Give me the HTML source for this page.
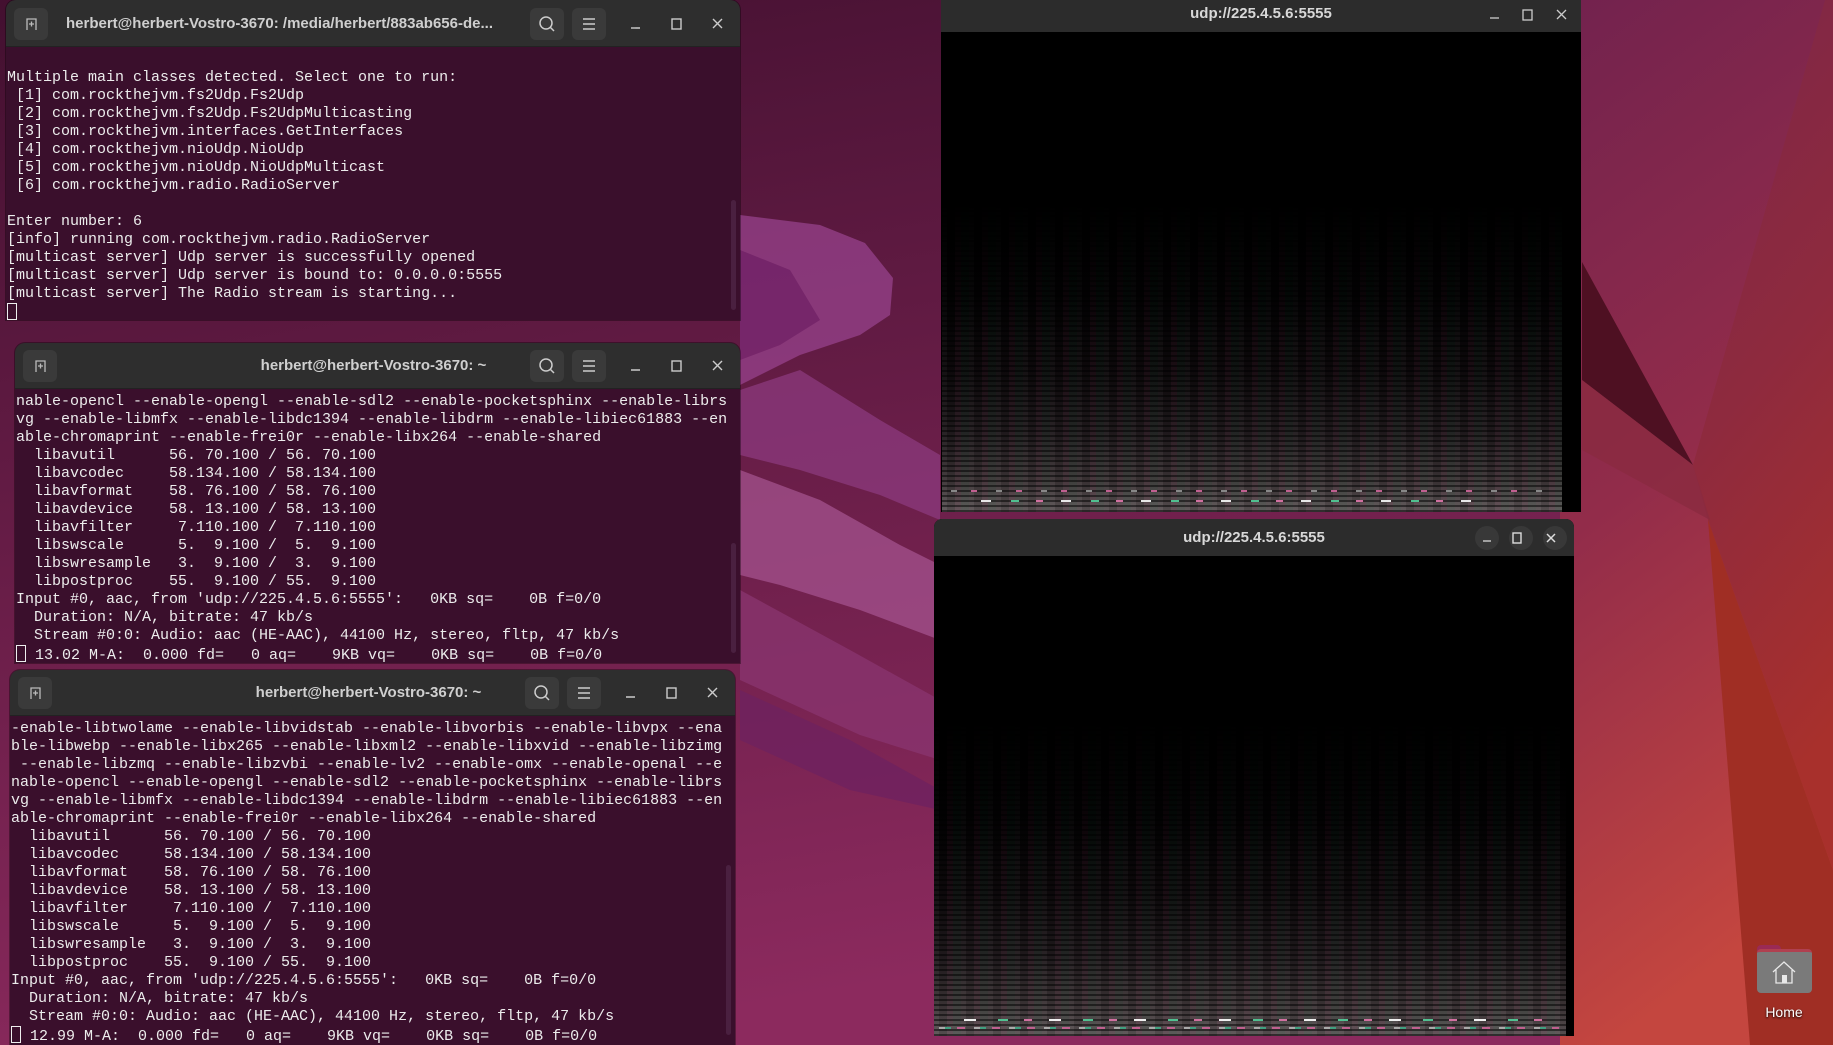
<!DOCTYPE html>
<html><head><meta charset="utf-8">
<style>
*{margin:0;padding:0;box-sizing:border-box}
html,body{width:1833px;height:1045px;overflow:hidden;background:#5a1a44;font-family:"Liberation Sans",sans-serif}
#bg{position:absolute;left:0;top:0}
.term{position:absolute;background:#3a0f2c;border-radius:10px 10px 0 0;overflow:hidden;box-shadow:0 0 0 1px rgba(0,0,0,.35)}
.tb{position:absolute;left:0;top:0;right:0;background:#2e2e2e;border-bottom:1px solid #222}
.btn{position:absolute;top:8px;width:34px;height:32px;background:#3a3a3a;border-radius:6px}
.title{position:absolute;top:0;color:#cfcfcf;font-weight:bold;font-size:15px;white-space:nowrap}
pre{position:absolute;font-family:"Liberation Mono",monospace;font-size:15px;line-height:18px;color:#ececec;white-space:pre}
.cur{display:inline-block;width:10px;height:17px;border:1px solid #eee;vertical-align:-3px}
.sb{position:absolute;right:4px;width:5px;background:#4a2040;border-radius:3px}
.vw{position:absolute;background:#000;overflow:hidden}
.vtb{position:absolute;left:0;top:0;right:0;background:#2c2c2c;color:#d8d8d8;font-weight:bold;font-size:15px;text-align:center}
.spec{position:absolute;background:
 repeating-linear-gradient(0deg,rgba(0,0,0,.5) 0 2px,rgba(0,0,0,0) 2px 5px),
 repeating-linear-gradient(90deg,rgba(255,255,255,.03) 0 5px,rgba(0,0,0,.1) 5px 13px,rgba(255,80,160,.05) 13px 19px,rgba(60,255,160,.04) 19px 27px),
 linear-gradient(180deg,#000 0%,#030203 30%,#0e0a0c 55%,#221c1f 75%,#3e3638 90%,#5e5658 100%);
 -webkit-mask-image:linear-gradient(180deg,transparent 0%,#000 45%);mask-image:linear-gradient(180deg,transparent 0%,#000 45%)}
.hl{position:absolute;height:2px}
</style></head><body>
<svg id="bg" width="1833" height="1045" viewBox="0 0 1833 1045">
<defs>
<linearGradient id="g0" x1="0" y1="0" x2="0.3" y2="1"><stop offset="0" stop-color="#431030"/><stop offset="1" stop-color="#8c2a5e"/></linearGradient>
<linearGradient id="g1" x1="0" y1="0" x2="0.2" y2="1"><stop offset="0" stop-color="#72224e"/><stop offset="0.5" stop-color="#922c4a"/><stop offset="1" stop-color="#c4463f"/></linearGradient>
<linearGradient id="g2" x1="0" y1="0" x2="0.2" y2="1"><stop offset="0" stop-color="#7c2648"/><stop offset="0.5" stop-color="#8e2a3e"/><stop offset="1" stop-color="#a8302c"/></linearGradient>
</defs>
<rect width="1833" height="1045" fill="url(#g0)"/>
<rect x="1560" width="273" height="1045" fill="url(#g1)"/>
<polygon points="1825,0 1833,0 1833,870 1708,520 1693,465" fill="url(#g2)"/>
<polygon points="1833,870 1708,520 1750,1045 1833,1045" fill="#a02e24"/>
<polygon points="1582,262 1693,465 1582,380" fill="#4e1022"/>
<polygon points="1582,380 1693,465 1710,520 1582,450" fill="#8a2a40" opacity=".8"/>
<g opacity=".75">
<polygon points="740,215 820,225 865,243 893,278 890,315 860,335 800,355 780,365 740,385" fill="#97428c"/>
<polygon points="740,250 790,270 820,320 780,345 740,360" fill="#7e2a78"/>
<polygon points="740,390 800,370 880,420 940,455 940,520 880,495 800,470 740,455" fill="#8c3a7e"/>
<polygon points="740,470 820,500 900,545 940,565 940,640 860,610 780,585 740,575" fill="#a4528e"/>
<polygon points="740,590 850,650 940,700 940,760 860,735 740,680" fill="#8a3570"/>
<polygon points="740,690 850,740 940,790 940,810 850,790 740,740" fill="#6e2260"/>
</g>
</svg>

<!-- Terminal 1 -->
<div class="term" style="left:6px;top:0;width:734px;height:320px">
 <div class="tb" style="height:47px">
  <div class="btn" style="left:8px"><svg width="34" height="32"><path d="M13 22V11h9v11M15 16h5M17.5 13.5v5" stroke="#bbb" fill="none" stroke-width="1.3"/></svg></div>
  <div class="title" style="left:60px;line-height:47px">herbert@herbert-Vostro-3670: /media/herbert/883ab656-de...</div>
  <div class="btn" style="left:524px"><svg width="34" height="32"><circle cx="16" cy="15" r="6" stroke="#ccc" fill="none" stroke-width="1.5"/><path d="M20 19l4 4" stroke="#ccc" stroke-width="1.5"/></svg></div>
  <div class="btn" style="left:566px"><svg width="34" height="32"><path d="M11 11h12M11 16h12M11 21h12" stroke="#ccc" stroke-width="1.4"/></svg></div>
  <svg style="position:absolute;left:620px;top:12px" width="110" height="24"><path d="M5 16h9" stroke="#ccc" stroke-width="1.4"/><rect x="46" y="7" width="9" height="10" stroke="#ccc" fill="none" stroke-width="1.4"/><path d="M87 7l9 9M96 7l-9 9" stroke="#ccc" stroke-width="1.4"/></svg>
 </div>
 <div class="sb" style="top:200px;height:110px"></div>
 <pre style="left:1px;top:69px">Multiple main classes detected. Select one to run:
 [1] com.rockthejvm.fs2Udp.Fs2Udp
 [2] com.rockthejvm.fs2Udp.Fs2UdpMulticasting
 [3] com.rockthejvm.interfaces.GetInterfaces
 [4] com.rockthejvm.nioUdp.NioUdp
 [5] com.rockthejvm.nioUdp.NioUdpMulticast
 [6] com.rockthejvm.radio.RadioServer

Enter number: 6
[info] running com.rockthejvm.radio.RadioServer
[multicast server] Udp server is successfully opened
[multicast server] Udp server is bound to: 0.0.0.0:5555
[multicast server] The Radio stream is starting...
<span class="cur"></span></pre>
</div>

<!-- Terminal 2 -->
<div class="term" style="left:15px;top:343px;width:725px;height:320px">
 <div class="tb" style="height:46px">
  <div class="btn" style="left:8px;top:7px"><svg width="34" height="32"><path d="M13 22V11h9v11M15 16h5M17.5 13.5v5" stroke="#bbb" fill="none" stroke-width="1.3"/></svg></div>
  <div class="title" style="left:0;right:0;text-align:center;line-height:46px;padding-right:8px">herbert@herbert-Vostro-3670: ~</div>
  <div class="btn" style="left:515px;top:7px"><svg width="34" height="32"><circle cx="16" cy="15" r="6" stroke="#ccc" fill="none" stroke-width="1.5"/><path d="M20 19l4 4" stroke="#ccc" stroke-width="1.5"/></svg></div>
  <div class="btn" style="left:557px;top:7px"><svg width="34" height="32"><path d="M11 11h12M11 16h12M11 21h12" stroke="#ccc" stroke-width="1.4"/></svg></div>
  <svg style="position:absolute;left:611px;top:11px" width="110" height="24"><path d="M5 16h9" stroke="#ccc" stroke-width="1.4"/><rect x="46" y="7" width="9" height="10" stroke="#ccc" fill="none" stroke-width="1.4"/><path d="M87 7l9 9M96 7l-9 9" stroke="#ccc" stroke-width="1.4"/></svg>
 </div>
 <div class="sb" style="top:200px;height:110px"></div>
 <pre style="left:1px;top:50px">nable-opencl --enable-opengl --enable-sdl2 --enable-pocketsphinx --enable-librs
vg --enable-libmfx --enable-libdc1394 --enable-libdrm --enable-libiec61883 --en
able-chromaprint --enable-frei0r --enable-libx264 --enable-shared
  libavutil      56. 70.100 / 56. 70.100
  libavcodec     58.134.100 / 58.134.100
  libavformat    58. 76.100 / 58. 76.100
  libavdevice    58. 13.100 / 58. 13.100
  libavfilter     7.110.100 /  7.110.100
  libswscale      5.  9.100 /  5.  9.100
  libswresample   3.  9.100 /  3.  9.100
  libpostproc    55.  9.100 / 55.  9.100
Input #0, aac, from 'udp://225.4.5.6:5555':   0KB sq=    0B f=0/0
  Duration: N/A, bitrate: 47 kb/s
  Stream #0:0: Audio: aac (HE-AAC), 44100 Hz, stereo, fltp, 47 kb/s
<span class="cur"></span> 13.02 M-A:  0.000 fd=   0 aq=    9KB vq=    0KB sq=    0B f=0/0</pre>
</div>

<!-- Terminal 3 -->
<div class="term" style="left:10px;top:670px;width:725px;height:375px">
 <div class="tb" style="height:46px">
  <div class="btn" style="left:8px;top:7px"><svg width="34" height="32"><path d="M13 22V11h9v11M15 16h5M17.5 13.5v5" stroke="#bbb" fill="none" stroke-width="1.3"/></svg></div>
  <div class="title" style="left:0;right:0;text-align:center;line-height:46px;padding-right:8px">herbert@herbert-Vostro-3670: ~</div>
  <div class="btn" style="left:515px;top:7px"><svg width="34" height="32"><circle cx="16" cy="15" r="6" stroke="#ccc" fill="none" stroke-width="1.5"/><path d="M20 19l4 4" stroke="#ccc" stroke-width="1.5"/></svg></div>
  <div class="btn" style="left:557px;top:7px"><svg width="34" height="32"><path d="M11 11h12M11 16h12M11 21h12" stroke="#ccc" stroke-width="1.4"/></svg></div>
  <svg style="position:absolute;left:611px;top:11px" width="110" height="24"><path d="M5 16h9" stroke="#ccc" stroke-width="1.4"/><rect x="46" y="7" width="9" height="10" stroke="#ccc" fill="none" stroke-width="1.4"/><path d="M87 7l9 9M96 7l-9 9" stroke="#ccc" stroke-width="1.4"/></svg>
 </div>
 <div class="sb" style="top:195px;height:170px"></div>
 <pre style="left:1px;top:50px">-enable-libtwolame --enable-libvidstab --enable-libvorbis --enable-libvpx --ena
ble-libwebp --enable-libx265 --enable-libxml2 --enable-libxvid --enable-libzimg
 --enable-libzmq --enable-libzvbi --enable-lv2 --enable-omx --enable-openal --e
nable-opencl --enable-opengl --enable-sdl2 --enable-pocketsphinx --enable-librs
vg --enable-libmfx --enable-libdc1394 --enable-libdrm --enable-libiec61883 --en
able-chromaprint --enable-frei0r --enable-libx264 --enable-shared
  libavutil      56. 70.100 / 56. 70.100
  libavcodec     58.134.100 / 58.134.100
  libavformat    58. 76.100 / 58. 76.100
  libavdevice    58. 13.100 / 58. 13.100
  libavfilter     7.110.100 /  7.110.100
  libswscale      5.  9.100 /  5.  9.100
  libswresample   3.  9.100 /  3.  9.100
  libpostproc    55.  9.100 / 55.  9.100
Input #0, aac, from 'udp://225.4.5.6:5555':   0KB sq=    0B f=0/0
  Duration: N/A, bitrate: 47 kb/s
  Stream #0:0: Audio: aac (HE-AAC), 44100 Hz, stereo, fltp, 47 kb/s
<span class="cur"></span> 12.99 M-A:  0.000 fd=   0 aq=    9KB vq=    0KB sq=    0B f=0/0</pre>
</div>

<!-- UDP window 1 -->
<div class="vw" style="left:941px;top:0;width:640px;height:512px">
 <div class="vtb" style="height:32px;line-height:28px">udp://225.4.5.6:5555
  <svg style="position:absolute;left:540px;top:4px" width="100" height="22"><path d="M9 14h9" stroke="#ccc" stroke-width="1.3"/><rect x="42" y="6" width="9" height="10" stroke="#ccc" fill="none" stroke-width="1.3"/><path d="M76 6l9 9M85 6l-9 9" stroke="#ccc" stroke-width="1.3"/></svg>
 </div>
 <div class="spec" style="left:1px;top:200px;width:620px;height:312px"></div>
 <div class="hl" style="left:40px;top:500px;width:500px;background:repeating-linear-gradient(90deg,#e8e8e8 0 10px,transparent 10px 30px,#50c090 30px 38px,transparent 38px 55px,#d070a0 55px 62px,transparent 62px 80px)"></div>
 <div class="hl" style="left:10px;top:490px;width:600px;background:repeating-linear-gradient(90deg,#888 0 6px,transparent 6px 20px,#c06090 20px 26px,transparent 26px 45px)"></div>
</div>

<!-- UDP window 2 -->
<div class="vw" style="left:934px;top:519px;width:640px;height:517px;border-radius:8px 8px 0 0">
 <div class="vtb" style="height:37px;line-height:37px">udp://225.4.5.6:5555
  <div style="position:absolute;left:541px;top:7px;width:24px;height:24px;border-radius:12px;background:#383838"></div>
  <div style="position:absolute;left:575px;top:7px;width:24px;height:24px;border-radius:12px;background:#383838"></div>
  <div style="position:absolute;left:609px;top:7px;width:24px;height:24px;border-radius:12px;background:#383838"></div>
  <svg style="position:absolute;left:541px;top:7px" width="100" height="24"><path d="M8 15h8" stroke="#ddd" stroke-width="1.3"/><rect x="38" y="7" width="8" height="10" stroke="#ddd" fill="none" stroke-width="1.4"/><path d="M72 8l8 8M80 8l-8 8" stroke="#ddd" stroke-width="1.5"/></svg>
 </div>
 <div class="spec" style="left:0;top:200px;width:632px;height:317px"></div>
 <div class="hl" style="left:30px;top:500px;width:580px;background:repeating-linear-gradient(90deg,#f0f0f0 0 12px,transparent 12px 34px,#50c090 34px 44px,transparent 44px 60px,#d070a0 60px 68px,transparent 68px 85px)"></div>
 <div class="hl" style="left:5px;top:508px;width:620px;background:repeating-linear-gradient(90deg,#aaa 0 6px,#40a080 6px 12px,transparent 12px 18px,#c06090 18px 26px,transparent 26px 35px)"></div>
</div>

<!-- Home icon -->
<div style="position:absolute;left:1757px;top:945px;width:55px;height:48px">
 <div style="position:absolute;left:0;top:0;width:24px;height:10px;background:#9a2a55;border-radius:4px 4px 0 0"></div>
 <div style="position:absolute;left:0;top:4px;width:55px;height:44px;background:#7a7a7a;border-radius:4px;border-top:3px solid #b04050"></div>
 <svg style="position:absolute;left:14px;top:14px" width="28" height="28"><path d="M2 13L13 3l11 10M5 11v13h16V11" stroke="#e8e8e8" fill="none" stroke-width="1.3"/><rect x="11" y="16" width="5" height="8" fill="#e8e8e8"/></svg>
</div>
<div style="position:absolute;left:1754px;top:1004px;width:60px;text-align:center;color:#fff;font-size:14px;text-shadow:0 1px 2px #000">Home</div>
</body></html>
